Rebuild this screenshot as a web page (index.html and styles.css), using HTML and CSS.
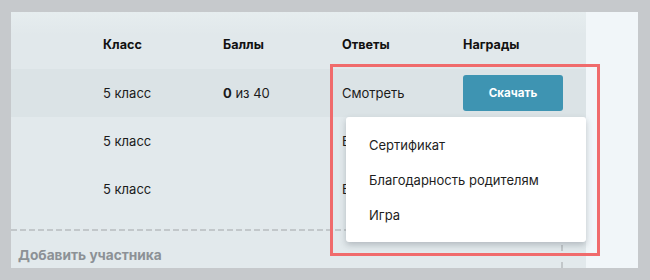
FILE: index.html
```html
<!DOCTYPE html>
<html lang="ru">
<head>
<meta charset="utf-8">
<link rel="stylesheet" href="styles.css">
</head>
<body>
<div class="panel">
  <div class="main">
    <div class="row head">
      <div class="cell c1"></div>
      <div class="cell">Класс</div>
      <div class="cell">Баллы</div>
      <div class="cell">Ответы</div>
      <div class="cell">Награды</div>
    </div>
    <div class="row active">
      <div class="cell c1"></div>
      <div class="cell">5 класс</div>
      <div class="cell"><b>0</b>&nbsp;из 40</div>
      <div class="cell">Смотреть</div>
      <div class="cell"><button class="btn">Скачать</button></div>
    </div>
    <div class="row">
      <div class="cell c1"></div>
      <div class="cell">5 класс</div>
      <div class="cell"></div>
      <div class="cell">Будет доступно</div>
      <div class="cell"></div>
    </div>
    <div class="row">
      <div class="cell c1"></div>
      <div class="cell">5 класс</div>
      <div class="cell"></div>
      <div class="cell">Будет доступно</div>
      <div class="cell"></div>
    </div>
    <div class="dash"></div>
    <div class="foot">
      <span class="add">Добавить участника</span>
      <span class="vdash"></span>
    </div>
  </div>
  <div class="side"></div>

  <div class="highlight"></div>
  <ul class="menu">
    <li>Сертификат</li>
    <li>Благодарность родителям</li>
    <li>Игра</li>
  </ul>
</div>
</body>
</html>
```
FILE: styles.css
```css
* { box-sizing: border-box; }
html, body { margin: 0; padding: 0; }
body {
  background: #c6c9cc;
  font-family: Inter, Roboto, "Liberation Sans", sans-serif;
  color: #1b1b1b;
  width: 650px;
  height: 280px;
  overflow: hidden;
}
.panel {
  position: relative;
  display: flex;
  margin: 12px 0 0 11px;
  width: 627px;
  height: 256px;
}
.main {
  width: 575px;
  background: #e2e9ec;
  display: flex;
  flex-direction: column;
}
.side {
  flex: 1;
  background: #f1f6f9;
}
.row {
  display: grid;
  grid-template-columns: 92px 120px 119px 121px 1fr;
  height: 48px;
  align-items: center;
  font-size: 13px;
}
.row.head {
  height: 57px;
  font-weight: 700;
  font-size: 12.6px;
  color: #111;
  padding-top: 7px;
  background: linear-gradient(#e6edef, #e1e8eb 40%);
}
.row.active { background: #dbe3e6; }
.cell { white-space: nowrap; }
.btn {
  display: block;
  width: 100px;
  height: 36px;
  border: 0;
  border-radius: 3px;
  background: #3e94b2;
  color: #fff;
  font-family: inherit;
  font-weight: 700;
  font-size: 11.6px;
  padding: 0;
}
.dash {
  margin-top: 16px;
  height: 2px;
  background: repeating-linear-gradient(90deg, #c2c7ca 0 6px, transparent 6px 9px);
}
.foot {
  flex: 1;
  display: flex;
  align-items: center;
  padding-left: 7px;
}
.add {
  font-weight: 700;
  font-size: 13.7px;
  color: #8c9196;
  padding-top: 10px;
  width: 543px;
}
.vdash {
  align-self: stretch;
  width: 2px;
  background: repeating-linear-gradient(180deg, #c2c7ca 0 3px, transparent 3px 14px, #c2c7ca 14px 17px);
}
.highlight {
  position: absolute;
  left: 319px;
  top: 52px;
  width: 270px;
  height: 192px;
  border: 3px solid #f06b6c;
}
.menu {
  position: absolute;
  left: 335px;
  top: 105px;
  width: 240px;
  height: 125px;
  margin: 0;
  padding: 11px 0 0 23px;
  list-style: none;
  background: #fff;
  border-radius: 3px;
  box-shadow: 0 3px 6px rgba(60, 70, 80, 0.28);
  font-size: 13px;
}
.menu li {
  height: 35px;
  line-height: 35px;
  color: #1e1e1e;
}
```
